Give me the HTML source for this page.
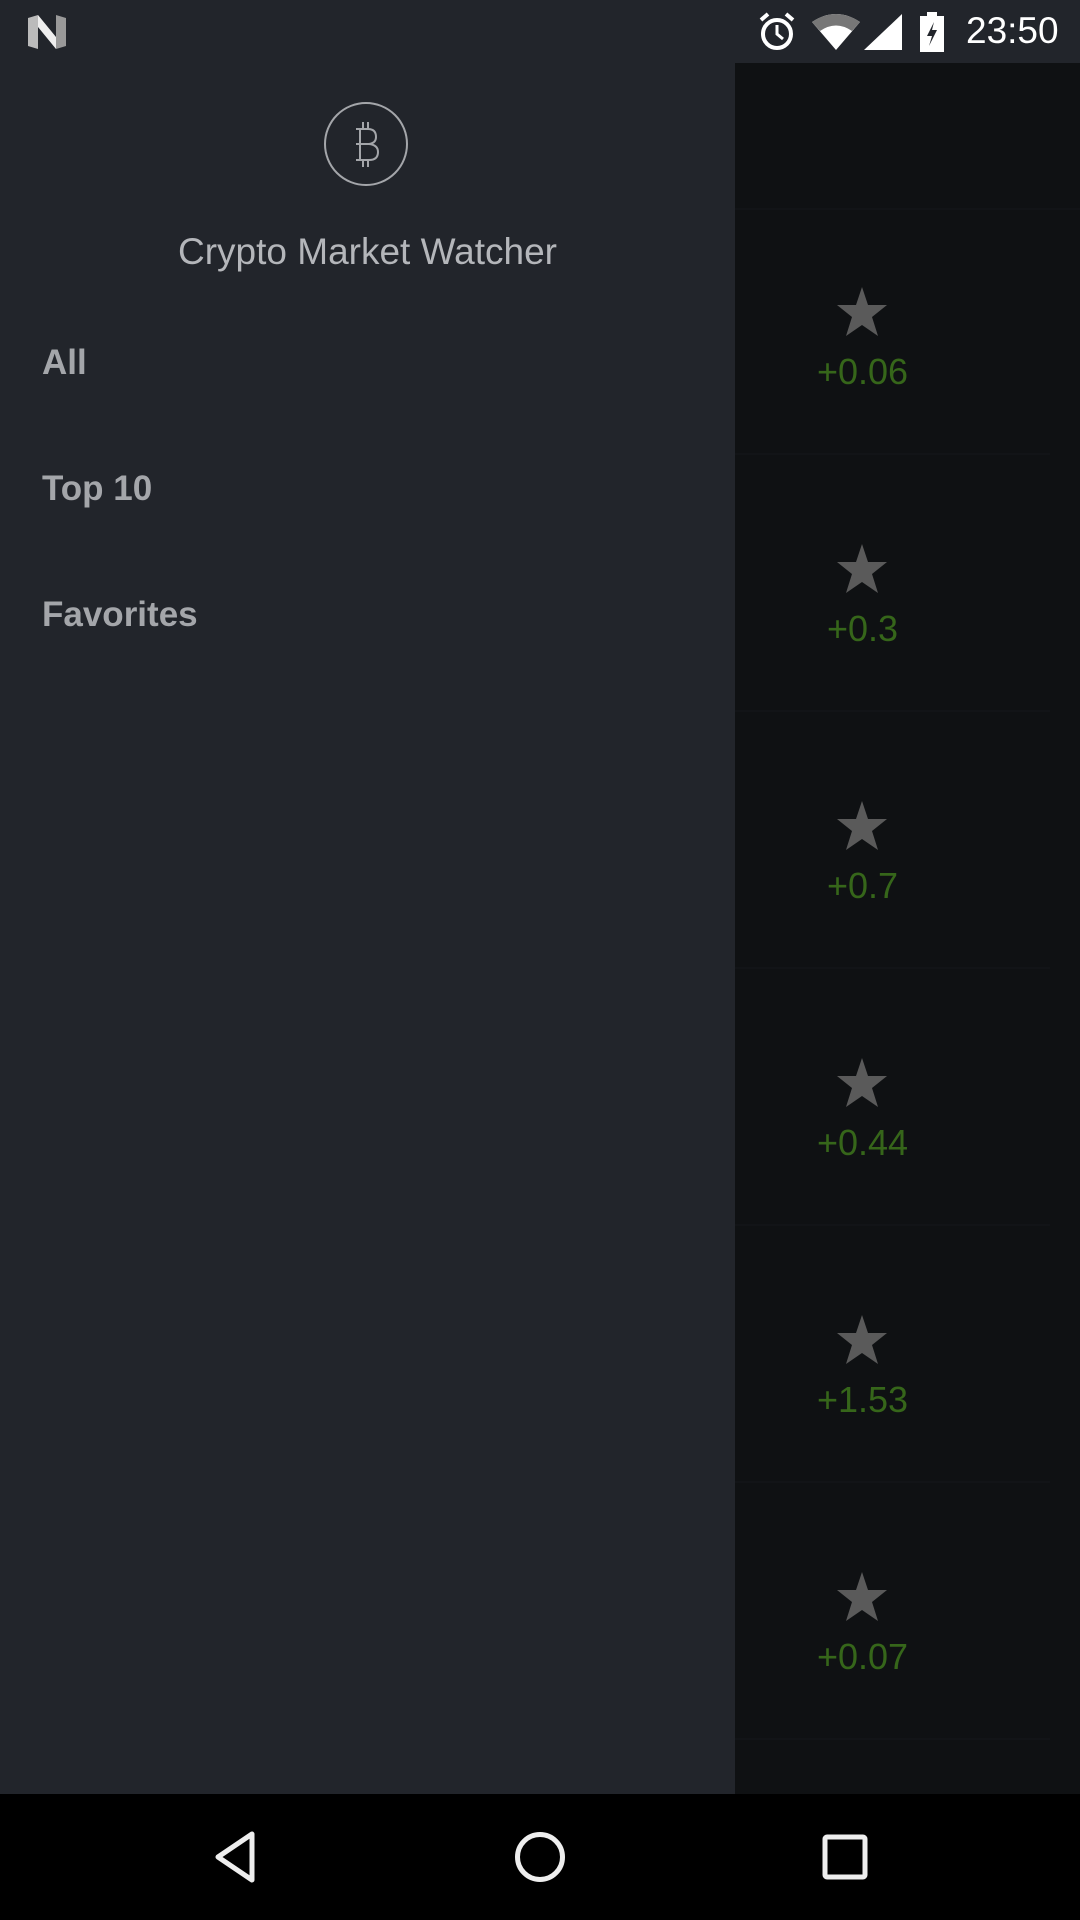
<!DOCTYPE html>
<html><head><meta charset="utf-8"><style>
*{margin:0;padding:0;box-sizing:border-box}
body{width:1080px;height:1920px;background:#0f1113;position:relative;overflow:hidden;font-family:"Liberation Sans",sans-serif}
.status{position:absolute;left:0;top:0;width:1080px;height:63px;background:#22252b}
.drawer{position:absolute;left:0;top:63px;width:735px;height:1731px;background:#22252b}
.nav{position:absolute;left:0;top:1794px;width:1080px;height:126px;background:#000}
.appbar{position:absolute;left:735px;top:63px;width:345px;height:147px;background:#0f1113;border-bottom:2px solid #121417}
.card{position:absolute;left:735px;width:315px;height:255px;border-bottom:2px solid #121417}
.chg{position:absolute;left:735px;width:255px;text-align:center;color:#36661a;font-size:36px}
.star{position:absolute;left:836px;width:52px;height:52px}
.menu{position:absolute;left:42px;color:#a4a6aa;font-size:35px;font-weight:bold}
</style></head><body>
<div class="status">
<svg style="position:absolute;left:28px;top:15px" width="40" height="34" viewBox="0 0 40 34"><path d="M0 3 L10 0 L10 34 L0 31Z" fill="#bbb"/><path d="M10 0 L28 22 L28 34 L10 12Z" fill="#eee"/><path d="M28 0 L38 3 L38 31 L28 34Z" fill="#999"/></svg>
<svg style="position:absolute;left:757px;top:12px" width="40" height="40" viewBox="0 0 40 40"><circle cx="20" cy="22" r="14" fill="none" stroke="#fff" stroke-width="4"/><path d="M20 13 V22 L26 27" stroke="#fff" stroke-width="3" fill="none"/><path d="M4 8 L11 2 M36 8 L29 2" stroke="#fff" stroke-width="4"/></svg>
<svg style="position:absolute;left:812px;top:14px" width="48" height="36" viewBox="0 0 48 36"><path d="M0 8 Q24 -8 48 8 L24 36Z" fill="#fff"/><path d="M0 8 Q24 -8 48 8 L40 17 Q24 6 8 17Z" fill="#777"/></svg>
<svg style="position:absolute;left:864px;top:14px" width="38" height="36"><path d="M38 0 V36 H0Z" fill="#fff"/></svg>
<svg style="position:absolute;left:920px;top:12px" width="24" height="40" viewBox="0 0 24 40"><rect x="0" y="4" width="24" height="36" fill="#fff"/><rect x="7" y="0" width="10" height="5" fill="#fff"/><path d="M14 10 L7 24 H12 L9 34 L17 18 H12Z" fill="#22252b"/></svg>
<div style="position:absolute;left:966px;top:10px;color:#fff;font-size:37px">23:50</div>
</div>
<div class="appbar"></div>
<div class="card" style="top:210px;height:245px"></div>
<div class="card" style="top:455px;height:257px"></div>
<div class="card" style="top:712px;height:257px"></div>
<div class="card" style="top:969px;height:257px"></div>
<div class="card" style="top:1226px;height:257px"></div>
<div class="card" style="top:1483px;height:257px"></div>
<svg width="0" height="0" style="position:absolute"><defs><path id="s" d="M26 1 L32 19 L51 19 L36 31 L42 50 L26 39 L10 50 L16 31 L1 19 L20 19Z" fill="#5a5a5a"/></defs></svg>
<svg class="star" style="top:286px" viewBox="0 0 52 52"><use href="#s"/></svg>
<svg class="star" style="top:543px" viewBox="0 0 52 52"><use href="#s"/></svg>
<svg class="star" style="top:800px" viewBox="0 0 52 52"><use href="#s"/></svg>
<svg class="star" style="top:1057px" viewBox="0 0 52 52"><use href="#s"/></svg>
<svg class="star" style="top:1314px" viewBox="0 0 52 52"><use href="#s"/></svg>
<svg class="star" style="top:1571px" viewBox="0 0 52 52"><use href="#s"/></svg>
<div class="chg" style="top:351px">+0.06</div>
<div class="chg" style="top:608px">+0.3</div>
<div class="chg" style="top:865px">+0.7</div>
<div class="chg" style="top:1122px">+0.44</div>
<div class="chg" style="top:1379px">+1.53</div>
<div class="chg" style="top:1636px">+0.07</div>
<div class="drawer">
<svg style="position:absolute;left:323px;top:38px" width="86" height="86" viewBox="0 0 86 86"><circle cx="43" cy="43" r="41" fill="none" stroke="#a4a6aa" stroke-width="2"/><path d="M33 28 H45 Q53 28 53 36 Q53 42 46 43 Q55 44 55 51 Q55 59 46 59 H33 M37 28 V59 M33 43 H46 M40 21 V28 M45 21 V28 M40 59 V66 M45 59 V66" fill="none" stroke="#a4a6aa" stroke-width="2"/></svg>
<div style="position:absolute;left:0;width:735px;top:168px;text-align:center;color:#b4b6ba;font-size:37px">Crypto Market Watcher</div>
</div>
<div class="menu" style="top:343px">All</div>
<div class="menu" style="top:469px">Top 10</div>
<div class="menu" style="top:595px">Favorites</div>
<div class="nav">
<svg style="position:absolute;left:214px;top:37px" width="44" height="52" viewBox="0 0 44 52"><path d="M38 3 V49 L4 26Z" fill="none" stroke="#eee" stroke-width="5" stroke-linejoin="round"/></svg>
<svg style="position:absolute;left:513px;top:36px" width="54" height="54"><circle cx="27" cy="27" r="22.5" fill="none" stroke="#eee" stroke-width="5"/></svg>
<svg style="position:absolute;left:822px;top:40px" width="46" height="46"><rect x="3" y="3" width="40" height="40" rx="2" fill="none" stroke="#eee" stroke-width="5"/></svg>
</div>
</body></html>
